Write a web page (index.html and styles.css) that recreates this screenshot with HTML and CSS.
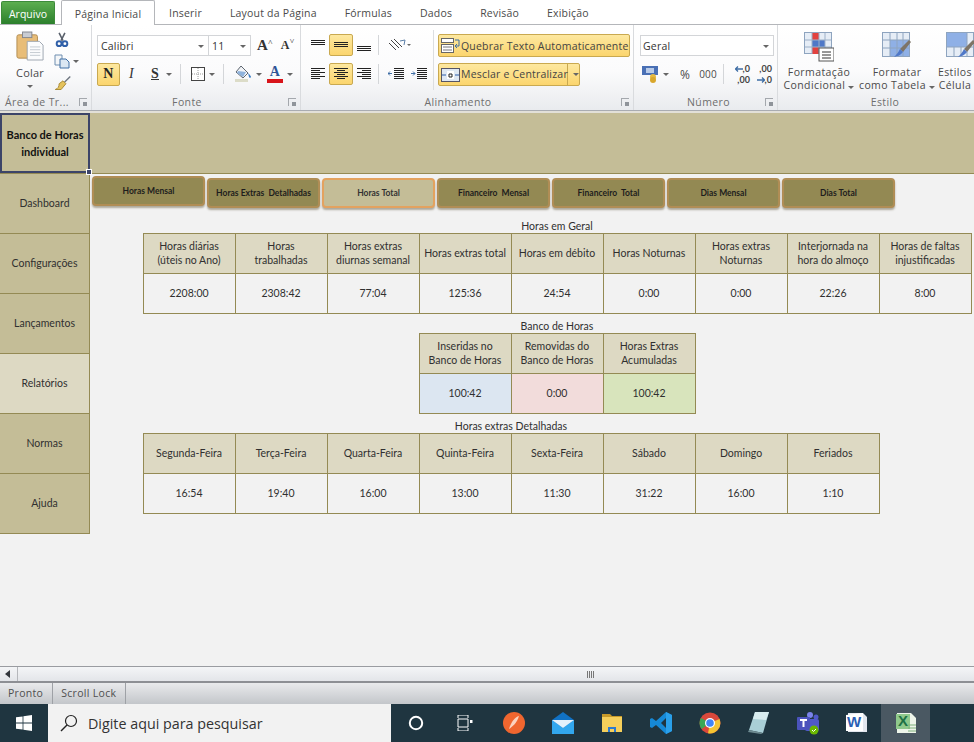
FILE: index.html
```html
<!DOCTYPE html>
<html>
<head>
    <title>Banco de Horas</title>
    <meta charset="UTF-8">
    <link rel="stylesheet" href="styles.css">
</head>
<body>
    <div class="tabs">
        <div class="tab-file">Arquivo</div>
        <div class="tab tab-active">Página Inicial</div>
        <div class="tab">Inserir</div>
        <div class="tab">Layout da Página</div>
        <div class="tab">Fórmulas</div>
        <div class="tab">Dados</div>
        <div class="tab">Revisão</div>
        <div class="tab">Exibição</div>
    </div>

    <div class="ribbon">
        <div class="group group-clip">
            <div class="group-body clip-body">
                <div class="paste">
                    <svg width="28" height="32" viewBox="0 0 30 32"><rect x="1" y="4" width="22" height="25" rx="2" fill="#e8bd78" stroke="#b08a50"/><rect x="7" y="1" width="10" height="6" fill="#c9ccd2" stroke="#80848c"/><path d="M12 11h13l4 4v16H12z" fill="#fbfcfd" stroke="#9aa3ad"/><path d="M15 17h11M15 20h11M15 23h11M15 26h11" stroke="#c2c8cf"/></svg>
                    <span>Colar</span>
                    <i class="arrow"></i>
                </div>
                <div class="clip-tools">
                    <svg width="16" height="16" viewBox="0 0 16 16"><path d="M5 1l4 8M11 1L7 9" stroke="#59606b" stroke-width="1.6"/><circle cx="5" cy="12" r="2.5" fill="none" stroke="#2f5fa8" stroke-width="2"/><circle cx="11" cy="12" r="2.5" fill="none" stroke="#2f5fa8" stroke-width="2"/></svg>
                    <div class="tool-row">
                        <svg width="16" height="15" viewBox="0 0 16 15"><path d="M1 1h7v10H1z" fill="#f4f6f8" stroke="#6f8eb0"/><path d="M6 5h6l3 3v6H6z" fill="#dbe7f3" stroke="#3f6ea5"/></svg>
                        <i class="arrow"></i>
                    </div>
                    <svg width="18" height="16" viewBox="0 0 18 16"><path d="M10 7l6-6 1 1-6 6z" fill="#6f7680"/><path d="M9 6l3 3-5 6H1c3-1 4-3 4-6z" fill="#e4c25c" stroke="#a98a35"/></svg>
                </div>
            </div>
            <div class="group-label label-clip">Área de Tr...<i class="launcher"></i></div>
        </div>

        <div class="group group-font">
            <div class="group-body">
                <div class="tool-line">
                    <div class="combo combo-font">Calibri<i class="arrow"></i></div>
                    <div class="combo combo-size">11<i class="arrow"></i></div>
                    <span class="grow-a big">A<sup>˄</sup></span>
                    <span class="grow-a small">A<sup>˅</sup></span>
                </div>
                <div class="tool-line font-tools">
                    <span class="btn-on btn-bold">N</span>
                    <span class="glyph-i">I</span>
                    <span class="glyph-s">S</span><i class="arrow"></i>
                    <b class="sep"></b>
                    <svg width="14" height="14" viewBox="0 0 14 14"><rect x=".5" y=".5" width="13" height="13" fill="#fff" stroke="#444"/><path d="M7 1v12M1 7h12" stroke="#999" stroke-dasharray="1 1"/></svg><i class="arrow"></i>
                    <b class="sep"></b>
                    <svg width="18" height="18" viewBox="0 0 18 18"><path d="M7 1l7 7-5 5-7-6z" fill="#f1f3f6" stroke="#5e6670"/><path d="M4 6l8 1-3 5-6-4z" fill="#8fb3dc"/><path d="M14 8c2 2 3 3 3 4s-2 1-2 0z" fill="#3f7fc4"/><rect x="1" y="14" width="13" height="3" fill="#dcdcc8"/></svg><i class="arrow"></i>
                    <span class="color-a">A</span><i class="arrow"></i>
                </div>
            </div>
            <div class="group-label label-shift">Fonte<i class="launcher"></i></div>
        </div>

        <div class="group group-align">
            <div class="group-body">
                <div class="tool-line">
                    <svg class="al" width="14" height="14" viewBox="0 0 14 14"><path d="M0 2.500h14M0 4.500h14M0 6.500h14"/></svg>
                    <span class="btn-on btn-al"><svg class="al" width="14" height="14" viewBox="0 0 14 14"><path d="M0 4.500h14M0 6.500h14M0 8.500h14"/></svg></span>
                    <svg class="al" width="14" height="14" viewBox="0 0 14 14"><path d="M0 8.500h14M0 10.500h14M0 12.500h14"/></svg>
                    <b class="sep"></b>
                    <svg width="24" height="14" viewBox="0 0 24 14"><path d="M3 2l8 8M1 5l7 7M6 1l8 8" stroke="#444" fill="none"/><path d="M12 3l5-1-1 5" stroke="#5b7fa8" fill="none"/><path d="M19 6h4l-2 2z" fill="#666"/></svg>
                </div>
                <div class="tool-line">
                    <svg class="al" width="14" height="14" viewBox="0 0 14 14"><path d="M0 1.500h14M0 3.500h9M0 5.500h14M0 7.500h9M0 9.500h14M0 11.500h9"/></svg>
                    <span class="btn-on btn-al"><svg class="al" width="14" height="14" viewBox="0 0 14 14"><path d="M0 1.500h14M3 3.500h8M0 5.500h14M3 7.500h8M0 9.500h14M3 11.500h8"/></svg></span>
                    <svg class="al" width="14" height="14" viewBox="0 0 14 14"><path d="M0 1.500h14M5 3.500h9M0 5.500h14M5 7.500h9M0 9.500h14M5 11.500h9"/></svg>
                    <b class="sep"></b>
                    <svg class="al" width="16" height="14" viewBox="0 0 16 14"><path d="M6 1.500h10M6 3.500h10M6 5.500h10M6 7.500h10M6 9.500h10M6 11.500h10"/><path d="M0 6.500h4M0 6.500l2-2M0 6.500l2 2" class="al-blue"/></svg>
                    <svg class="al" width="16" height="14" viewBox="0 0 16 14"><path d="M6 1.500h10M6 3.500h10M6 5.500h10M6 7.500h10M6 9.500h10M6 11.500h10"/><path d="M0 6.500h4M4 6.500l-2-2M4 6.500l-2 2" class="al-blue"/></svg>
                </div>
            </div>
            <div class="wrap-col">
                <div class="btn-wide btn-wrap">
                    <svg width="19" height="16" viewBox="0 0 19 16"><rect x=".5" y=".5" width="12" height="4" fill="#fff" stroke="#666"/><rect x=".5" y="6.500" width="12" height="8" fill="#fff" stroke="#666"/><path d="M2 9h9M2 12h9" stroke="#777"/><path d="M14 2h4v6h-3M16 6l-2 2 2 2" stroke="#3f6ea5" fill="none"/></svg>
                    Quebrar Texto Automaticamente
                </div>
                <div class="btn-wide btn-merge">
                    <svg width="19" height="14" viewBox="0 0 19 14"><rect x=".5" y=".5" width="18" height="13" fill="#dfe8f3" stroke="#556"/><rect x="6" y="3" width="7" height="8" fill="#fff"/><path d="M1 7h4M18 7h-4" stroke="#2f5fa8"/><path d="M8 6h3v3H8z" fill="none" stroke="#222"/></svg>
                    <span class="merge-text">Mesclar e Centralizar</span>
                    <i class="arrow"></i>
                </div>
            </div>
            <div class="group-label label-shift">Alinhamento<i class="launcher"></i></div>
        </div>

        <div class="group group-number">
            <div class="group-body">
                <div class="tool-line">
                    <div class="combo combo-num">Geral<i class="arrow"></i></div>
                </div>
                <div class="tool-line num-tools">
                    <svg width="18" height="18" viewBox="0 0 18 18"><rect x="0" y="1" width="16" height="9" fill="#4a70b5"/><rect x="4" y="3" width="8" height="5" fill="#b9cbe8"/><circle cx="11" cy="12" r="3" fill="#e6b93f"/><circle cx="11" cy="15" r="3" fill="#d9a72c"/></svg><i class="arrow"></i>
                    <span class="num-pct">%</span>
                    <span class="num-000">000</span>
                    <b class="sep"></b>
                    <span class="num-dec">
                        <svg width="8" height="6" viewBox="0 0 8 6"><path d="M8 3H1M3 .5L.5 3 3 5.500" stroke="#3f6ea5" fill="none" stroke-width="1.300"/></svg><span>,0</span>
                        <span class="num-dec-full">,00</span>
                    </span>
                    <span class="num-dec">
                        <span class="num-dec-full">,00</span>
                        <svg width="8" height="6" viewBox="0 0 8 6"><path d="M0 3h7M5 .5L7.500 3 5 5.500" stroke="#3f6ea5" fill="none" stroke-width="1.300"/></svg><span>,0</span>
                    </span>
                </div>
            </div>
            <div class="group-label label-number">Número<i class="launcher"></i></div>
        </div>

        <div class="group group-style">
            <div class="style-row">
                <div class="style-btn">
                    <svg width="30" height="30" viewBox="0 0 30 30"><rect x=".5" y=".5" width="27" height="21" fill="#e6edf6" stroke="#8ea4bf"/><rect x="8" y="1" width="7" height="7" fill="#e2423f"/><rect x="8" y="8" width="13" height="7" fill="#4f78c8"/><rect x="8" y="15" width="7" height="7" fill="#e2423f"/><path d="M1 8h26M1 15h26M8 1v21M15 1v21M21 1v21" stroke="#9db0c8" fill="none"/><rect x="15" y="16" width="15" height="13" fill="#fff" stroke="#555"/><path d="M18 20h9M18 23h9M18 26h9" stroke="#333"/></svg>
                    <span>Formatação<br>Condicional <i class="arrow"></i></span>
                </div>
                <div class="style-btn">
                    <svg width="30" height="30" viewBox="0 0 30 30"><rect x=".5" y=".5" width="27" height="24" fill="#e6edf6" stroke="#8ea4bf"/><rect x="8" y="8" width="19" height="16" fill="#8fb0e6"/><path d="M1 8h26M1 16h26M8 1v23M15 1v23M21 1v23" stroke="#8ea4bf" fill="none"/><path d="M27 8l2 2-8 10-3-3z" fill="#7d7467"/><path d="M18 17l3 3c-3 4-6 4-9 5 2-2 4-4 6-8z" fill="#4f78c8"/></svg>
                    <span>Formatar<br>como Tabela <i class="arrow"></i></span>
                </div>
                <div class="style-btn style-btn-cut">
                    <svg width="30" height="30" viewBox="0 0 30 30"><rect x=".5" y=".5" width="27" height="24" fill="#e6edf6" stroke="#8ea4bf"/><rect x="1" y="1" width="20" height="14" fill="#8fb0e6"/><path d="M1 15h26M8 15v9M15 15v9M21 1v23" stroke="#8ea4bf" fill="none"/><path d="M27 8l2 2-8 10-3-3z" fill="#7d7467"/><path d="M18 17l3 3c-3 4-6 4-9 5 2-2 4-4 6-8z" fill="#4f78c8"/></svg>
                    <span>Estilos<br>Célula</span>
                </div>
            </div>
            <div class="group-label label-style">Estilo</div>
        </div>
    </div>

    <div class="sheet">
        <div class="banner">
            <div class="banner-title">Banco de Horas individual<i class="sel-handle"></i></div>
        </div>
        <div class="sheet-body">
            <div class="sidebar">
                <div class="side-item">Dashboard</div>
                <div class="side-item">Configurações</div>
                <div class="side-item">Lançamentos</div>
                <div class="side-item side-active">Relatórios</div>
                <div class="side-item">Normas</div>
                <div class="side-item">Ajuda</div>
            </div>
            <div class="content">
                <div class="sub-nav">
                    <div class="sub-btn sub-first">Horas Mensal</div>
                    <div class="sub-btn">Horas Extras  Detalhadas</div>
                    <div class="sub-btn sub-on">Horas Total</div>
                    <div class="sub-btn">Financeiro  Mensal</div>
                    <div class="sub-btn">Financeiro  Total</div>
                    <div class="sub-btn">Dias Mensal</div>
                    <div class="sub-btn">Dias Total</div>
                </div>

                <div class="block block-wide">
                    <div class="block-title">Horas em Geral</div>
                    <div class="table cols-9">
                        <div class="th">Horas diárias (úteis no Ano)</div>
                        <div class="th">Horas<br>trabalhadas</div>
                        <div class="th">Horas extras diurnas semanal</div>
                        <div class="th">Horas extras total</div>
                        <div class="th">Horas em débito</div>
                        <div class="th">Horas Noturnas</div>
                        <div class="th">Horas extras Noturnas</div>
                        <div class="th">Interjornada na hora do almoço</div>
                        <div class="th">Horas de faltas injustificadas</div>
                        <div class="td">2208:00</div>
                        <div class="td">2308:42</div>
                        <div class="td">77:04</div>
                        <div class="td">125:36</div>
                        <div class="td">24:54</div>
                        <div class="td">0:00</div>
                        <div class="td">0:00</div>
                        <div class="td">22:26</div>
                        <div class="td">8:00</div>
                    </div>
                </div>

                <div class="block block-mid">
                    <div class="block-title">Banco de Horas</div>
                    <div class="table cols-3">
                        <div class="th">Inseridas no<br>Banco de Horas</div>
                        <div class="th">Removidas do Banco de Horas</div>
                        <div class="th">Horas Extras Acumuladas</div>
                        <div class="td td-blue">100:42</div>
                        <div class="td td-pink">0:00</div>
                        <div class="td td-green">100:42</div>
                    </div>
                </div>

                <div class="block block-days">
                    <div class="block-title">Horas extras Detalhadas</div>
                    <div class="table cols-8">
                        <div class="th">Segunda-Feira</div>
                        <div class="th">Terça-Feira</div>
                        <div class="th">Quarta-Feira</div>
                        <div class="th">Quinta-Feira</div>
                        <div class="th">Sexta-Feira</div>
                        <div class="th">Sábado</div>
                        <div class="th">Domingo</div>
                        <div class="th">Feriados</div>
                        <div class="td">16:54</div>
                        <div class="td">19:40</div>
                        <div class="td">16:00</div>
                        <div class="td">13:00</div>
                        <div class="td">11:30</div>
                        <div class="td">31:22</div>
                        <div class="td">16:00</div>
                        <div class="td">1:10</div>
                    </div>
                </div>
            </div>
        </div>
    </div>

    <div class="scrollbar">
        <div class="scroll-left"></div>
        <div class="scroll-thumb">
            <svg width="8" height="7" viewBox="0 0 8 7"><path d="M.5 0v7M2.500 0v7M4.500 0v7M6.500 0v7" stroke="#777"/></svg>
        </div>
    </div>

    <div class="statusbar">
        <div class="status-cell">Pronto</div>
        <div class="status-cell">Scroll Lock</div>
    </div>

    <div class="taskbar">
        <div class="start">
            <svg width="16" height="16" viewBox="0 0 16 16"><path d="M0 2.300l6.600-.9v6.200H0zM7.400 1.300L16 0v7.600H7.400zM0 8.400h6.600v6.200L0 13.700zM7.400 8.400H16V16l-8.600-1.300z" fill="#fff"/></svg>
        </div>
        <div class="search">
            <svg width="18" height="18" viewBox="0 0 18 18"><circle cx="11" cy="7" r="5.500" fill="none" stroke="#222" stroke-width="1.200"/><path d="M7 11l-6 6" stroke="#222" stroke-width="1.400"/></svg>
            <span>Digite aqui para pesquisar</span>
        </div>
        <div class="task-icons">
            <div class="task-item"><svg width="16" height="16" viewBox="0 0 16 16"><circle cx="8" cy="8" r="6.200" fill="none" stroke="#fff" stroke-width="2"/></svg></div>
            <div class="task-item"><svg width="16" height="16" viewBox="0 0 16 16"><path d="M1 0h10v3M1 0v3M1 4h10v8H1zM1 13v3h10v-3" fill="none" stroke="#fff"/><rect x="13" y="5" width="2.500" height="3" fill="#fff"/></svg></div>
            <div class="task-item"><svg width="24" height="24" viewBox="0 0 24 24"><circle cx="12" cy="12" r="11" fill="#f0662f"/><path d="M17 5c-4 1-8 6-10 13 3-2 8-6 10-13z" fill="#fbd3bf"/></svg></div>
            <div class="task-item"><svg width="22" height="24" viewBox="0 0 22 24"><path d="M0 9l11-8 11 8v14H0z" fill="#1172c4"/><path d="M0 9l11 8 11-8v14H0z" fill="#32a7ee"/><path d="M0 9l11 8 11-8" fill="#e4f1fb"/></svg></div>
            <div class="task-item"><svg width="22" height="20" viewBox="0 0 22 20"><path d="M1 1h8l2 2h10v4H1z" fill="#c79a2a"/><rect x="1" y="4" width="20" height="15" fill="#f5cf5b"/><path d="M7 19v-5h8v5h-2v-3H9v3z" fill="#2c7ad0"/></svg></div>
            <div class="task-item"><svg width="24" height="24" viewBox="0 0 24 24"><path d="M17 1l6 3v16l-6 3-10-9-4 3-2-1V8l2-1 4 3z" fill="#1689d6"/><path d="M17 7l-5 5 5 5z" fill="#1f3540"/><path d="M17 1l6 3v16l-6 3z" fill="#2aa0ea"/></svg></div>
            <div class="task-item"><svg width="22" height="22" viewBox="0 0 22 22"><circle cx="11" cy="11" r="10.500" fill="#d9483b"/><path d="M11 11L2.500 17a10.500 10.500 0 0 1-.5-11z" fill="#3aa757"/><path d="M11 11l9.500-4A10.500 10.500 0 0 1 9 21.300z" fill="#f5c431"/><circle cx="11" cy="11" r="5" fill="#fff"/><circle cx="11" cy="11" r="3.800" fill="#4285f4"/></svg></div>
            <div class="task-item"><svg width="22" height="24" viewBox="0 0 22 24"><path d="M7 1h14L15 22 1 19z" fill="#a9cfd6"/><path d="M7 1h14l-3 8L5 8z" fill="#d8ecef"/><path d="M1 19l14 3-2 1L0 21z" fill="#6f8c92"/></svg></div>
            <div class="task-item"><svg width="24" height="26" viewBox="0 0 24 24"><circle cx="14" cy="4" r="3" fill="#7b83eb"/><circle cx="20" cy="6" r="2.500" fill="#5059c9"/><rect x="9" y="8" width="14" height="12" rx="2" fill="#5059c9"/><rect x="1" y="6" width="13" height="13" rx="1" fill="#4b53bc"/><path d="M4 9h7M7.500 9v7" stroke="#fff" stroke-width="2"/><circle cx="18" cy="19" r="4.500" fill="#6bb700"/><path d="M16 19l1.500 1.500L20 18" stroke="#fff" fill="none"/></svg></div>
            <div class="task-item"><svg width="22" height="22" viewBox="0 0 22 22"><path d="M2 1h15l4 4v15H2z" fill="#e3e7ee"/><path d="M0 3l17-2v18L0 19z" fill="#fff"/><text x="1" y="15" class="task-letter task-word">W</text></svg></div>
            <div class="task-item task-on"><svg width="22" height="22" viewBox="0 0 22 22"><path d="M2 1h14l5 5v15H2z" fill="#eef5ea"/><path d="M1 2h14v15H1z" fill="#8fc98c"/><text x="3" y="14" class="task-letter task-excel">X</text><path d="M13 13h8M13 16h8M13 19h8" stroke="#7fb07c"/></svg></div>
        </div>
    </div>
</body>
</html>
```

FILE: styles.css
```css
* {
    box-sizing: border-box;
}

html, body {
    margin: 0;
    height: 100%;
}

body {
    width: 974px;
    height: 742px;
    overflow: hidden;
    display: flex;
    flex-direction: column;
    background-color: #f2f2f2;
    font-family: "Open Sans", sans-serif;
    font-size: 10.5px;
    color: #4a4a4a;
}

i {
    font-style: normal;
}

/* ---- tabs ---- */

.tabs {
    height: 25px;
    flex: none;
    display: flex;
    align-items: flex-end;
    background-color: #fff;
    border-bottom: 1px solid #b4b6ba;
    padding-left: 1px;
}

.tab-file {
    width: 54px;
    height: 23px;
    margin-right: 6px;
    background: linear-gradient(#5cae4f, #2b7f2c);
    border: 1px solid #3d8b3a;
    border-bottom: 0;
    border-radius: 2px 2px 0 0;
    color: #fff;
    text-align: center;
    line-height: 24px;
}

.tab {
    height: 24px;
    padding: 0 14px;
    line-height: 26px;
    letter-spacing: 0.2px;
    white-space: nowrap;
}

.tab-active {
    width: 94px;
    height: 25px;
    margin-bottom: -1px;
    padding: 0;
    text-align: center;
    background-color: #fff;
    border: 1px solid #b4b6ba;
    border-bottom: 0;
    border-radius: 2px 2px 0 0;
}

/* ---- ribbon ---- */

.ribbon {
    height: 86px;
    flex: none;
    display: flex;
    background: linear-gradient(#fff, #fbfbfc 55%, #e9ebee);
    border-bottom: 1px solid #a9acb1;
    letter-spacing: 0.2px;
}

.group {
    position: relative;
    flex: none;
    border-right: 1px solid #d9dbde;
    height: 85px;
}

.group-clip {
    width: 92px;
}

.group-font {
    width: 209px;
    padding-left: 5px;
}

.group-align {
    width: 333px;
    padding-left: 10px;
    display: flex;
}

.group-number {
    width: 144px;
    padding-left: 5px;
}

.group-style {
    width: 196px;
    border-right: 0;
}

.group-body {
    height: 65px;
    padding-top: 9px;
}

.group-label {
    position: absolute;
    left: 0;
    right: 0;
    bottom: 0;
    height: 15px;
    line-height: 14px;
    text-align: center;
    color: #6e6e6e;
    letter-spacing: 0.4px;
}

.label-clip {
    padding-left: 5px;
    text-align: left;
}

.label-shift {
    padding-right: 18px;
}

.label-number {
    padding-left: 6px;
}

.label-style {
    width: 214px;
    right: auto;
}

.launcher {
    position: absolute;
    right: 4px;
    top: 3px;
    width: 8px;
    height: 8px;
    border: 1px solid #a4a8ad;
    border-width: 1px 0 0 1px;
}

.launcher::after {
    content: "";
    position: absolute;
    right: 0;
    bottom: 0;
    width: 4px;
    height: 4px;
    background-color: #8f949a;
}

.arrow {
    display: inline-block;
    flex: none;
    width: 0;
    height: 0;
    border: 3px solid transparent;
    border-top: 3px solid #666;
    border-bottom: 0;
}

.sep {
    display: block;
    flex: none;
    width: 1px;
    height: 20px;
    background-color: #d4d6d9;
}

.tool-line {
    display: flex;
    align-items: center;
    height: 22px;
    margin-bottom: 7px;
}

/* clipboard */

.clip-body {
    display: flex;
    padding-top: 5px;
}

.paste {
    width: 54px;
    margin-left: 3px;
    display: flex;
    flex-direction: column;
    align-items: center;
    font-size: 11px;
}

.paste svg {
    margin-bottom: 3px;
}

.paste .arrow {
    margin-top: 5px;
}

.clip-tools {
    display: flex;
    flex-direction: column;
    gap: 6px;
    margin-left: -3px;
    padding-top: 2px;
}

.tool-row {
    display: flex;
    align-items: center;
    gap: 3px;
}

/* font */

.combo {
    position: relative;
    height: 21px;
    line-height: 20px;
    padding-left: 3px;
    background-color: #fff;
    border: 1px solid #d3d5d8;
    color: #333;
    font-size: 10.5px;
}

.combo .arrow {
    position: absolute;
    right: 4px;
    top: 9px;
}

.combo-font {
    width: 112px;
}

.combo-size {
    width: 43px;
    margin-left: -1px;
}

.combo-num {
    width: 134px;
    margin-left: 1px;
    padding-left: 2px;
}

.grow-a {
    font-family: "Liberation Serif", serif;
    font-weight: bold;
    color: #333;
}

.grow-a sup {
    font-size: 8px;
    color: #555;
    vertical-align: 5px;
    line-height: 0;
}

.big {
    font-size: 15px;
    margin-left: 6px;
}

.small {
    font-size: 12px;
    margin-left: 8px;
}

.btn-on {
    display: flex;
    align-items: center;
    justify-content: center;
    background: linear-gradient(#fde8a0, #fbd56e);
    border: 1px solid #c9a950;
    border-radius: 2px;
}

.btn-bold {
    width: 23px;
    height: 23px;
    font-family: "Liberation Serif", serif;
    font-weight: bold;
    font-size: 14px;
    color: #222;
}

.font-tools .glyph-i {
    margin-left: 5px;
    width: 13px;
    font-family: "Liberation Serif", serif;
    font-style: italic;
    font-size: 14px;
    color: #333;
    text-align: center;
}

.font-tools .glyph-s {
    margin-left: 11px;
    width: 12px;
    font-family: "Liberation Serif", serif;
    font-weight: bold;
    font-size: 14px;
    color: #333;
    text-decoration: underline;
    text-align: center;
}

.font-tools .glyph-s + .arrow {
    margin-left: 5px;
}

.font-tools .sep {
    margin: 0 10px 0 8px;
}

.font-tools svg + .arrow {
    margin-left: 4px;
}

.color-a {
    margin-left: 5px;
    width: 16px;
    height: 18px;
    font-family: "Liberation Serif", serif;
    font-weight: bold;
    font-size: 14px;
    line-height: 14px;
    text-align: center;
    color: #2f5597;
    border-bottom: 4px solid #d8141a;
}

.color-a + .arrow {
    margin-left: 4px;
}

/* alignment */

.al path {
    stroke: #222;
    fill: none;
}

.al .al-blue {
    stroke: #3f6ea5;
}

.btn-al {
    width: 24px;
    height: 22px;
    margin: 0 4px;
}

.group-align .group-body {
    width: 123px;
    flex: none;
    border-right: 1px solid #dcdee1;
    height: 60px;
    margin-top: 5px;
    padding-top: 4px;
}

.group-align .sep {
    margin: 0 9px 0 7px;
}

.group-align .tool-line svg + svg {
    margin-left: 7px;
}

.wrap-col {
    padding: 9px 0 0 4px;
}

.btn-wide {
    display: flex;
    align-items: center;
    height: 23px;
    padding-left: 2px;
    gap: 1px;
    background: linear-gradient(#fde8a0, #fbd56e);
    border: 1px solid #c9a950;
    border-radius: 2px;
    color: #444;
    white-space: nowrap;
}

.btn-wrap {
    width: 192px;
    margin-bottom: 6px;
}

.btn-merge {
    width: 142px;
}

.merge-text {
    width: 107px;
    border-right: 1px solid #c9a950;
    line-height: 21px;
}

.btn-merge .arrow {
    margin-left: 4px;
}

/* number */

.num-tools {
    padding-left: 3px;
}

.num-tools > .arrow {
    margin-left: 3px;
}

.num-pct {
    margin-left: 11px;
    font-size: 12px;
}

.num-000 {
    margin-left: 9px;
    font-size: 10px;
}

.num-tools .sep {
    margin: 0 9px 0 6px;
}

.num-dec {
    width: 17px;
    margin-right: 5px;
    font-family: "Lato", sans-serif;
    font-size: 9px;
    line-height: 11px;
    font-weight: bold;
    color: #444;
    text-align: right;
    letter-spacing: 0;
}

.num-dec-full {
    display: block;
}

/* style */

.style-row {
    display: flex;
    padding: 7px 0 0 2px;
    height: 68px;
}

.style-btn {
    width: 78px;
    display: flex;
    flex-direction: column;
    align-items: center;
    text-align: center;
    line-height: 13px;
    white-space: nowrap;
    letter-spacing: 0.4px;
}

.style-btn svg {
    margin-bottom: 4px;
}

.style-btn-cut {
    width: 38px;
}

.style-btn-cut svg {
    margin-left: 12px;
    flex: none;
}

/* ---- planilha ---- */

.sheet {
    flex: 1;
    min-height: 0;
    border-top: 2px solid #e2e0d8;
    font-family: "Lato", sans-serif;
    font-size: 10.5px;
    color: #303030;
}

.banner {
    height: 61px;
    background-color: #c4bd97;
    border-bottom: 1px solid #948a54;
}

.banner-title {
    position: relative;
    width: 90px;
    height: 60px;
    display: flex;
    align-items: center;
    justify-content: center;
    text-align: center;
    font-weight: bold;
    font-size: 11px;
    line-height: 17px;
    color: #111;
    border: 2px solid #3c4468;
}

.sel-handle {
    position: absolute;
    right: -4px;
    bottom: -4px;
    width: 6px;
    height: 6px;
    background-color: #3c4468;
    border: 1px solid #fff;
}

.sheet-body {
    display: flex;
}

.sidebar {
    width: 90px;
    flex: none;
    border-right: 1px solid #948a54;
}

.side-item {
    height: 60px;
    display: flex;
    align-items: center;
    justify-content: center;
    padding-bottom: 1px;
    background-color: #c4bd97;
    border-bottom: 1px solid #948a54;
}

.side-active {
    background-color: #ddd9c3;
}

.content {
    flex: 1;
    min-width: 0;
}

.sub-nav {
    display: flex;
    gap: 2px;
    padding: 4px 0 0 2px;
    height: 44px;
    align-items: flex-start;
}

.sub-btn {
    width: 113px;
    height: 30px;
    display: flex;
    align-items: center;
    justify-content: center;
    background-color: #938953;
    border: 2px solid #b08d55;
    border-radius: 4px;
    box-shadow: 0 2px 2px rgba(90, 80, 50, 0.45);
    font-weight: bold;
    font-size: 8.5px;
    color: #1d1d1d;
    white-space: pre;
}

.sub-first {
    margin-top: -2px;
}

.sub-on {
    background-color: #c4bd97;
    border-color: #e3a25f;
    color: #333;
}

.block {
    display: flex;
    flex-direction: column;
    align-items: center;
    margin-left: 53px;
}

.block-wide {
    width: 828px;
    padding-top: 5px;
    height: 100px;
}

.block-mid {
    width: 276px;
    margin-left: 329px;
    padding-top: 5px;
    height: 100px;
}

.block-days {
    width: 736px;
    padding-top: 5px;
}

.block-title {
    height: 10px;
    line-height: 7px;
    white-space: nowrap;
}

.table {
    display: grid;
    grid-auto-rows: 40px;
    border-left: 1px solid #948a54;
    border-top: 1px solid #948a54;
}

.cols-9 {
    grid-template-columns: repeat(9, 92px);
}

.cols-3 {
    grid-template-columns: repeat(3, 92px);
}

.cols-8 {
    grid-template-columns: repeat(8, 92px);
}

.th,
.td {
    display: block;
    text-align: center;
    padding: 0 2px 2px;
    border-right: 1px solid #948a54;
    border-bottom: 1px solid #948a54;
    line-height: 14px;
    align-content: center;
}

.th {
    background-color: #ddd9c3;
}

.td-blue {
    background-color: #dce6f1;
}

.td-pink {
    background-color: #f2dcdb;
}

.td-green {
    background-color: #d8e4bc;
}

/* ---- rodapé ---- */

.scrollbar {
    height: 17px;
    flex: none;
    display: flex;
    background: linear-gradient(#f4f5f7, #e3e5e9);
    border-top: 1px solid #9a9ca1;
    border-bottom: 2px solid #8d8f94;
}

.scroll-left {
    width: 18px;
    position: relative;
    border-right: 1px solid #b5b7bb;
}

.scroll-left::after {
    content: "";
    position: absolute;
    left: 5px;
    top: 3px;
    border: 4px solid transparent;
    border-right: 5px solid #33373c;
    border-left: 0;
}

.scroll-thumb {
    flex: 1;
    display: flex;
    align-items: center;
    justify-content: center;
    padding-left: 190px;
}

.statusbar {
    height: 21px;
    flex: none;
    display: flex;
    background: linear-gradient(#e9eaec, #c3c6ca);
    color: #4f4f4f;
    font-size: 10.5px;
    letter-spacing: 0.3px;
}

.status-cell {
    padding: 0 9px 0 8px;
    line-height: 21px;
    border-right: 1px solid #9ea1a6;
    white-space: nowrap;
}

.taskbar {
    height: 38px;
    flex: none;
    display: flex;
    background-color: #1f3540;
}

.start {
    width: 48px;
    display: flex;
    align-items: center;
    justify-content: center;
}

.search {
    width: 343px;
    display: flex;
    align-items: center;
    gap: 10px;
    padding-left: 12px;
    background-color: #f2f2f2;
    font-family: "Open Sans", sans-serif;
    font-size: 14.3px;
    color: #333;
}

.task-icons {
    display: flex;
}

.task-item {
    width: 49px;
    display: flex;
    align-items: center;
    justify-content: center;
}

.task-on {
    background-color: #4a5862;
}

.task-letter {
    font-family: "Liberation Sans", sans-serif;
    font-weight: bold;
    font-size: 15px;
}

.task-word {
    fill: #2b5fb4;
}

.task-excel {
    fill: #1e7145;
}
```
